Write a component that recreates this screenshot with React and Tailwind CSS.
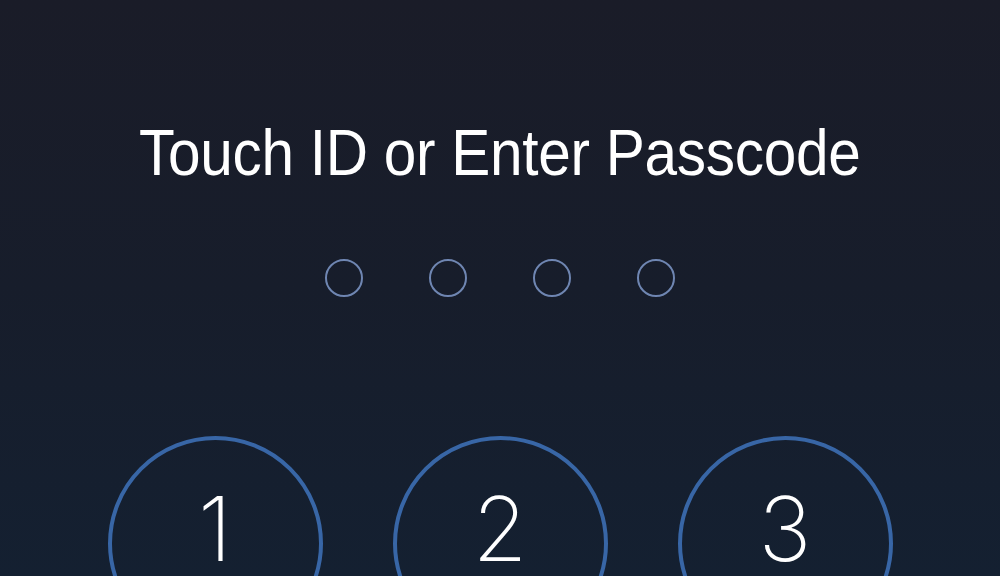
export default function App() {
  const dots = [0, 1, 2, 3];
  const keys = ["1", "2", "3"];
  return (
    <div className="w-[1000px] h-[576px] overflow-hidden flex flex-col items-center bg-gradient-to-b from-[#1a1c28] via-[#171d2b] to-[#142031]">
      <h1 className="pt-[120px] text-[65px] leading-none text-white tracking-[-0.3px] scale-x-[0.9] whitespace-nowrap font-['Liberation_Sans',Arial,sans-serif] font-normal">
        Touch ID or Enter Passcode
      </h1>
      <div className="mt-[74px] flex gap-[66px]">
        {dots.map((d) => (
          <div key={d} className="w-[38px] h-[38px] rounded-full border-2 border-[#6f86b2]" />
        ))}
      </div>
      <div className="mt-[139px] flex gap-[70px] shrink-0">
        {keys.map((k) => (
          <div
            key={k}
            className="w-[215px] h-[215px] shrink-0 rounded-full border-4 border-[#3866a6] flex justify-center items-start pt-[44px]"
          >
            <span className="text-[89px] leading-none text-white font-extralight font-['Inter','Liberation_Sans',sans-serif]">
              {k}
            </span>
          </div>
        ))}
      </div>
    </div>
  );
}
